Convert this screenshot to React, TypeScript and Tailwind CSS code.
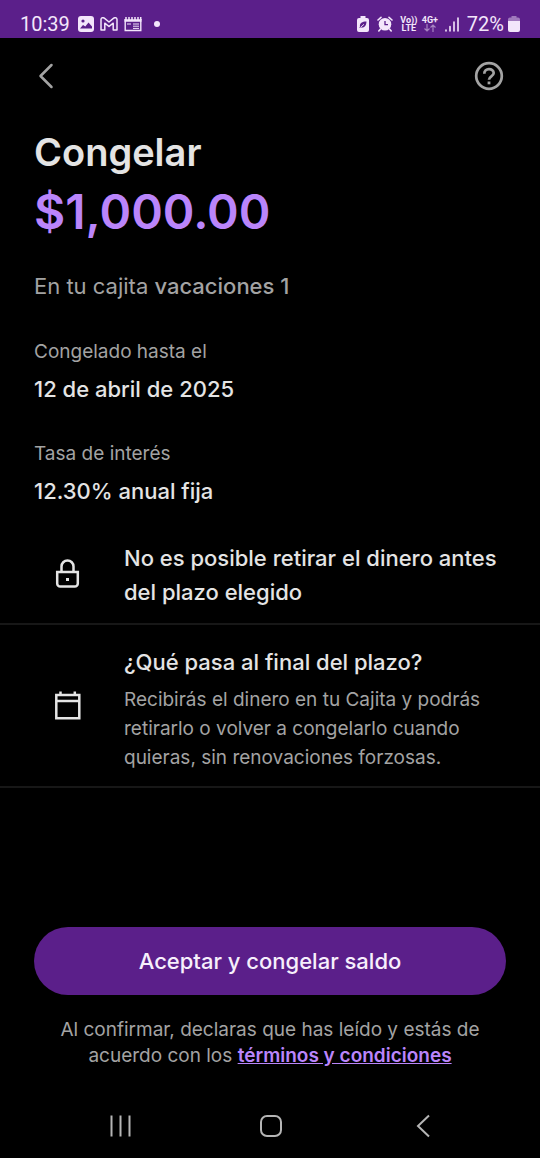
import type { ReactNode } from "react";

type Detail = {
  label: string;
  value: string;
};

const DETAILS: Detail[] = [
  { label: "Congelado hasta el", value: "12 de abril de 2025" },
  { label: "Tasa de interés", value: "12.30% anual fija" },
];

function StatusBar() {
  return (
    <div className="flex h-[38px] items-end justify-between bg-[#5b1f8a] pr-5 pb-1 pl-5 text-[#f3e6fb]">
      <div className="flex items-center">
        <span className="font-[Roboto,sans-serif] text-xl leading-5">10:39</span>

        {/* Picture */}
        <svg viewBox="0 0 16 16" className="ml-2 h-4 w-4" aria-hidden="true">
          <rect width="16" height="16" rx="3" fill="currentColor" />
          <circle cx="5" cy="5" r="1.6" fill="#5b1f8a" />
          <path d="M2 12.500l3-3.500 2.300 1.500L10.500 6.500l3.500 4v2z" fill="#5b1f8a" />
        </svg>

        {/* Mail */}
        <svg viewBox="0 0 18 14" className="ml-1.5 h-[14px] w-[18px]" fill="none" stroke="currentColor" strokeWidth="1.500" strokeLinejoin="round" aria-hidden="true">
          <path d="M1 2.500C1 .6 3 .2 4.300 1.200L9 5l4.700-3.800C15 .2 17 .6 17 2.500V13h-3.800V6.200L9 9.500 4.800 6.200V13H1z" />
        </svg>

        {/* News */}
        <svg viewBox="0 0 18 16" className="ml-1.5 h-4 w-[18px]" fill="none" stroke="currentColor" aria-hidden="true">
          <path d="M1.200 3v11.500h15.600V3" strokeWidth="1.4" />
          <path d="M.5 4.500h17" strokeWidth="2.500" />
          <path d="M2 1v3M5 1v3M8 1v3M11 1v3M14 1v3M16.700 1v3" strokeWidth="1.500" />
          <path d="M3 8h4M9 8h6M9 10.200h6M9 12.400h6" strokeWidth="1" />
        </svg>

        <span className="ml-3 h-1.5 w-1.5 rounded-full bg-current" />
      </div>

      <div className="flex items-center">
        {/* Battery saver */}
        <svg viewBox="0 0 12 16" className="h-4 w-3" aria-hidden="true">
          <path d="M3.500 0h5v2H10a2 2 0 0 1 2 2v10a2 2 0 0 1-2 2H2a2 2 0 0 1-2-2V4a2 2 0 0 1 2-2h1.500z" fill="currentColor" />
          <path d="M9.500 5.500C5 5.500 2.500 7 3 10.500L2.300 12l1.500-.6c4 .8 5.500-1.900 5.700-5.900z" fill="#5b1f8a" />
          <path d="M3.500 11.300L7 8.300" stroke="currentColor" strokeWidth=".9" />
        </svg>

        {/* Alarm */}
        <svg viewBox="0 0 16 16" className="ml-2 h-4 w-4" aria-hidden="true">
          <circle cx="8" cy="8.300" r="6.300" fill="currentColor" />
          <path d="M1 4l3-2.700M15 4l-3-2.700M3.500 13l-1.700 2M12.500 13l1.700 2" stroke="currentColor" strokeWidth="1.600" strokeLinecap="round" />
          <path d="M8 5v3.600h3" fill="none" stroke="#5b1f8a" strokeWidth="1.300" />
        </svg>

        <span className="ml-2 flex w-4 flex-col items-center font-[Roboto,sans-serif] text-[9px] leading-2 font-bold">
          <span>Vo))</span>
          <span>LTE</span>
        </span>

        <span className="ml-1 flex w-[18px] flex-col items-center font-[Roboto,sans-serif] text-[9px] leading-2 font-bold">
          <span>4G+</span>
          <svg viewBox="0 0 12 8" className="h-2 w-3 opacity-50" fill="none" stroke="currentColor" strokeWidth="1.200" aria-hidden="true">
            <path d="M3 0v7M.5 4.500L3 7l2.500-2.500M9 8V1M6.500 3.500L9 1l2.500 2.500" />
          </svg>
        </span>

        {/* Signal */}
        <svg viewBox="0 0 14 16" className="ml-1.5 h-4 w-3.5" stroke="currentColor" strokeWidth="1.600" strokeLinecap="round" aria-hidden="true">
          <path d="M1 14v1M5 10.500V15M9 6v9M13 2v13" />
        </svg>

        <span className="ml-2 font-[Roboto,sans-serif] text-xl leading-5">72%</span>

        <svg viewBox="0 0 12 16" className="ml-1 h-4 w-3" fill="currentColor" aria-hidden="true">
          <path d="M3.500 0h5v1.500H10a2 2 0 0 1 2 2V6H0V3.500a2 2 0 0 1 2-2h1.500z" opacity=".45" />
          <path d="M0 5h12v9a2 2 0 0 1-2 2H2a2 2 0 0 1-2-2z" />
        </svg>
      </div>
    </div>
  );
}

function InfoRow({ icon, children }: { icon: ReactNode; children: ReactNode }) {
  return (
    <li className="flex items-center border-b-2 border-[#171717] pr-8 pb-[14px] pl-[52px]">
      <span className="mr-[42px] shrink-0 text-[#e4e4e4]">{icon}</span>
      <div>{children}</div>
    </li>
  );
}

export default function App() {
  return (
    <div className="flex min-h-screen flex-col bg-black font-[Inter,sans-serif] text-[#e4e4e4]">
      <StatusBar />

      <header className="flex h-[76px] items-center justify-between px-9 text-[#a3a3a3]">
        <button type="button" aria-label="Volver">
          <svg viewBox="0 0 18 26" className="h-[26px] w-[18px]" fill="none" stroke="currentColor" strokeWidth="2.500" strokeLinecap="round" strokeLinejoin="round" aria-hidden="true">
            <path d="M15.500 2L4.500 13l11 11" />
          </svg>
        </button>
        <button type="button" aria-label="Ayuda">
          <svg viewBox="0 0 30 30" className="h-[30px] w-[30px]" fill="none" stroke="currentColor" strokeWidth="2.700" aria-hidden="true">
            <circle cx="15" cy="15" r="12.800" />
            <path d="M10.300 12.800c-.2-6.300 9.400-6 9.400-.8 0 3.600-4.700 3.200-4.700 6.800" />
            <path d="M15 20.500v2.800" strokeWidth="2.800" />
          </svg>
        </button>
      </header>

      <main>
        <section className="px-[34px]">
          <h1 className="font-semibold">
            <span className="block text-[38px] leading-[76px]">Congelar</span>
            <span className="block text-5xl leading-[44px] text-[#ba85fb]">$1,000.00</span>
          </h1>
          <p className="mt-9 text-[22px] leading-8 text-[#a3a3a3]">
            En tu cajita <b className="font-medium">vacaciones 1</b>
          </p>
          <dl>
            {DETAILS.map((detail) => (
              <div key={detail.label} className="mt-8 first:mt-[34px]">
                <dt className="text-[19px] leading-8 text-[#a3a3a3]">{detail.label}</dt>
                <dd className="mt-1 text-[22px] leading-[34px] font-medium">{detail.value}</dd>
              </div>
            ))}
          </dl>
        </section>

        <ul className="mt-[33px]">
          <InfoRow
            icon={
              <svg viewBox="0 0 30 30" className="h-[30px] w-[30px] overflow-visible" fill="none" stroke="currentColor" strokeWidth="2.500" aria-hidden="true">
                <path d="M5.200 12h20.600v11.500a3 3 0 0 1-3 3H8.200a3 3 0 0 1-3-3z" />
                <path d="M9.500 12V6.500a6 6 0 0 1 12 0V12" />
                <path d="M14 19.500h3" strokeWidth="3" />
              </svg>
            }
          >
            <h2 className="text-[22px] leading-[34px] font-medium">
              No es posible retirar el dinero antes del plazo elegido
            </h2>
          </InfoRow>
          <InfoRow
            icon={
              <svg viewBox="0 0 30 30" className="mt-3 h-[30px] w-[30px]" fill="none" stroke="currentColor" strokeWidth="2.500" aria-hidden="true">
                <path d="M4.300 5h23v23.200h-23zM4.300 11h23" />
                <path d="M8.500 1.500V5M22.800 1.500V5" />
              </svg>
            }
          >
            <h2 className="pt-5 text-[22px] leading-[34px] font-medium">¿Qué pasa al final del plazo?</h2>
            <p className="mt-1.5 text-[19px] leading-[29px] text-[#a3a3a3]">
              Recibirás el dinero en tu Cajita y podrás retirarlo o volver a congelarlo cuando quieras, sin renovaciones forzosas.
            </p>
          </InfoRow>
        </ul>
      </main>

      <footer className="mt-auto px-[34px] pt-8 text-center">
        <button type="button" className="h-[68px] w-full rounded-full bg-[#5b1f8a] text-[22px] font-medium text-[#f7effc]">
          Aceptar y congelar saldo
        </button>
        <p className="mt-[22px] px-5 text-[19px] leading-[26px] text-[#a3a3a3]">
          Al confirmar, declaras que has leído y estás de acuerdo con los{" "}
          <a href="#terminos" className="font-semibold text-[#ba85fb] underline">
            términos y condiciones
          </a>
        </p>
      </footer>

      <nav className="mt-6 flex h-[65px] items-center justify-between px-[105px] text-[#b5b5b5]">
        <button type="button" aria-label="Recientes">
          <svg viewBox="0 0 30 24" className="h-6 w-[30px]" stroke="currentColor" strokeWidth="2" aria-hidden="true">
            <path d="M6.500 1.500v21M15.500 1.500v21M24.500 1.500v21" />
          </svg>
        </button>
        <button type="button" aria-label="Inicio">
          <svg viewBox="0 0 24 24" className="h-6 w-6" fill="none" stroke="currentColor" strokeWidth="2" aria-hidden="true">
            <rect x="3" y="2" width="20" height="20" rx="6" />
          </svg>
        </button>
        <button type="button" aria-label="Atrás">
          <svg viewBox="0 0 30 24" className="h-6 w-[30px]" fill="none" stroke="currentColor" strokeWidth="2" aria-hidden="true">
            <path d="M24 1.500L13 12l11 10.500" />
          </svg>
        </button>
      </nav>
    </div>
  );
}
